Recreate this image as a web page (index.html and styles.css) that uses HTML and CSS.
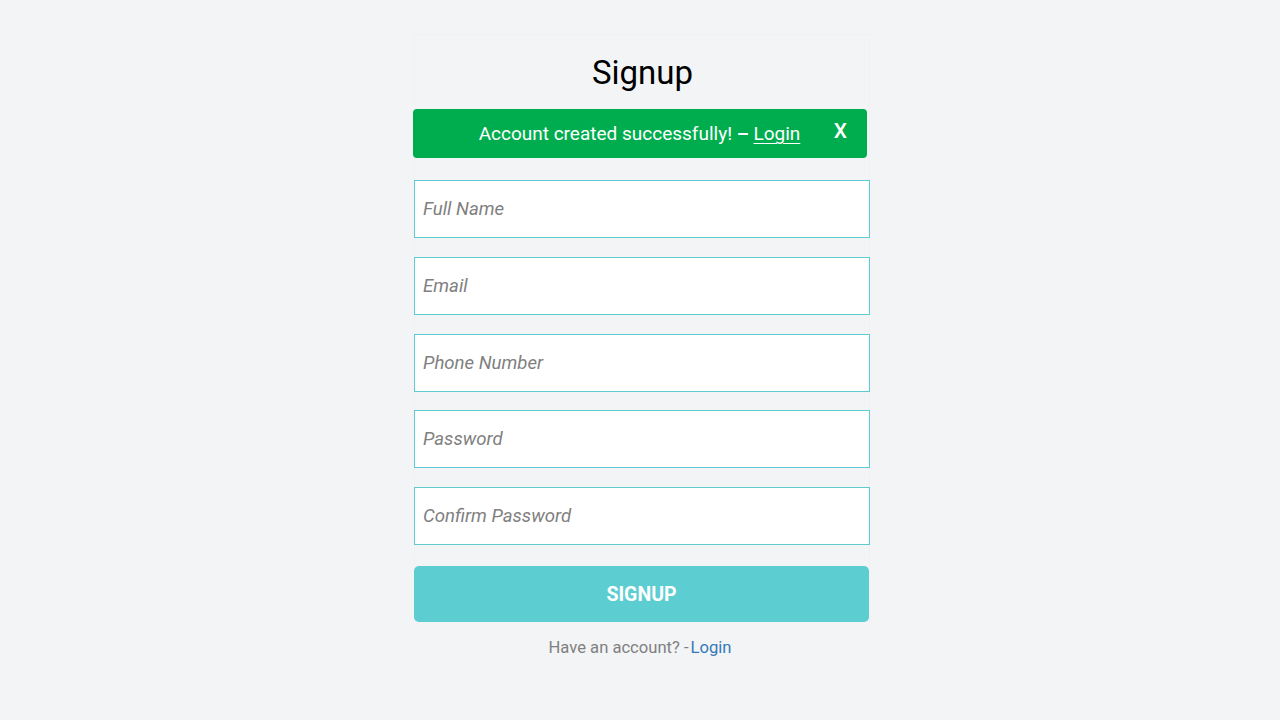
FILE: index.html
```
<!DOCTYPE html>
<html>
<head>
<meta charset="utf-8">
<link rel="stylesheet" href="styles.css">
</head>
<body>
<div class="wrap">
  <h1 class="title">Signup</h1>
  <div class="alert">
    <span class="alert-text">Account created successfully! <span class="dash">–</span> <a class="alert-link" href="#">Login</a></span>
    <span class="close">X</span>
  </div>
  <form class="form">
    <input class="field" type="text" placeholder="Full Name">
    <input class="field" type="text" placeholder="Email">
    <input class="field" type="text" placeholder="Phone Number">
    <input class="field" type="password" placeholder="Password">
    <input class="field" type="password" placeholder="Confirm Password">
    <button class="btn" type="button">SIGNUP</button>
  </form>
</div>
<p class="footer">Have an account? -<a class="footer-link" href="#">Login</a></p>
</body>
</html>
```
FILE: styles.css
```
html, body {
  margin: 0;
  padding: 0;
  background: #f3f4f6;
  font-family: Roboto, "Liberation Sans", sans-serif;
}
body {
  padding-top: 34px;
}
.wrap {
  width: 456px;
  margin-left: calc(50% - 226px);
  padding-top: 17px;
  box-shadow: inset 0 0 0 1px #eff1f3;
}
.title {
  margin: 0;
  font-size: 33px;
  font-weight: 400;
  line-height: 43px;
  text-align: center;
  color: #000;
  padding-left: 1px;
}
.alert {
  position: relative;
  margin: 15px 3px 0 -1px;
  height: 49px;
  background: #00ad4e;
  border-radius: 4px;
  display: flex;
  align-items: center;
  justify-content: center;
  color: #fff;
  font-size: 19px;
}
.alert-text {
  padding-right: 1px;
}
.dash {
  font-weight: 700;
}
.alert-link {
  color: #fff;
  text-decoration: underline;
  text-underline-offset: 3px;
  text-decoration-thickness: 1px;
}
.close {
  position: absolute;
  right: 20px;
  top: 10px;
  font-size: 21px;
  font-weight: 500;
}
.form {
  margin: 22px 0 0 0;
  display: flex;
  flex-direction: column;
}
.field {
  box-sizing: border-box;
  width: 456px;
  height: 58px;
  margin: 0 0 18.75px 0;
  border: 1px solid #5ecbd0;
  background: #fff;
  padding: 0 8px;
  font-family: Roboto, "Liberation Sans", sans-serif;
  font-size: 18.6px;
  font-style: italic;
  color: #333;
  outline: none;
}
.field::placeholder {
  color: #808080;
  font-style: italic;
}
.btn {
  margin-top: 2px;
  width: 455px;
  height: 56px;
  padding-top: 2px;
  border: none;
  border-radius: 5px;
  background: #5ccdd1;
  color: #fff;
  font-family: Roboto, "Liberation Sans", sans-serif;
  font-size: 19.5px;
  font-weight: 700;
  cursor: pointer;
}
.footer {
  margin: 15px 0 0 0;
  text-align: center;
  font-size: 16.6px;
  color: #808080;
  line-height: 22px;
}
.footer-link {
  color: #337ab7;
  text-decoration: none;
  margin-left: 2px;
}
```
